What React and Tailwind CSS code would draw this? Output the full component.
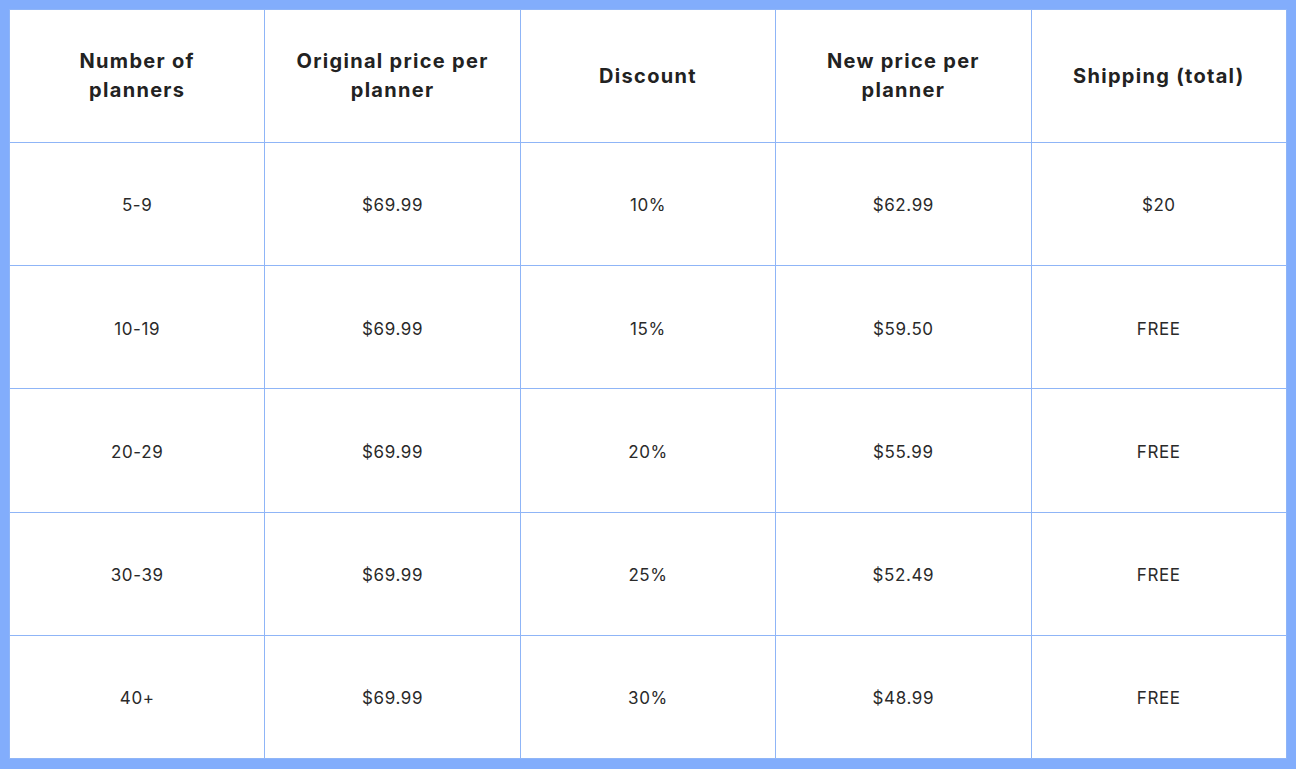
export default function App() {
  const headers = ["Number of planners", "Original price per planner", "Discount", "New price per planner", "Shipping (total)"];
  const rows = [
    ["5-9", "$69.99", "10%", "$62.99", "$20"],
    ["10-19", "$69.99", "15%", "$59.50", "FREE"],
    ["20-29", "$69.99", "20%", "$55.99", "FREE"],
    ["30-39", "$69.99", "25%", "$52.49", "FREE"],
    ["40+", "$69.99", "30%", "$48.99", "FREE"],
  ];
  return (
    <div className="w-[1296px] h-[769px] bg-[#82adfc] pt-[9px] pl-[9px] pr-[9px] pb-[10px]" style={{ fontFamily: 'Inter, "Open Sans", sans-serif' }}>
      <table className="w-full h-full table-fixed border-collapse bg-white text-[#222222]">
        <thead>
          <tr className="h-[133px]">
            {headers.map((h) => (
              <th key={h} className="border border-[#8fb5f7] font-bold text-[20px] tracking-[1.3px] leading-[29px] px-[26px] text-center align-middle">
                {h}
              </th>
            ))}
          </tr>
        </thead>
        <tbody>
          {rows.map((r, i) => (
            <tr key={i} className="h-[123px]">
              {r.map((c, j) => (
                <td key={j} className="border border-[#8fb5f7] text-[17px] tracking-[0.6px] font-normal text-center align-middle text-[#2a2a2a] pt-[4px]">
                  {c}
                </td>
              ))}
            </tr>
          ))}
        </tbody>
      </table>
    </div>
  );
}
